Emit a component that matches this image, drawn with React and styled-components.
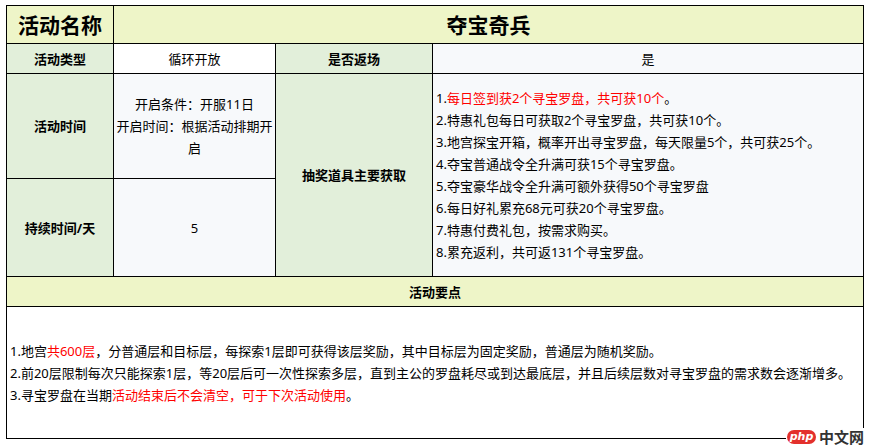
import React from 'react'
import styled, {createGlobalStyle} from 'styled-components'

const GlobalStyle = createGlobalStyle`
  body {
    margin: 0;
    background: #fff;
    font-family: "Noto Sans", "Noto Sans CJK SC", sans-serif;
    color: #000;
  }
`

const Page = styled.div`
  position: relative;
  width: 869px;
  height: 446px;
  padding: 5px 0 0 6px;
  box-sizing: border-box;
`

const Table = styled.table`
  width: 857px;
  border-collapse: collapse;
  table-layout: fixed;
  font-size: 13px;
  line-height: 22px;
`

const Row = styled.tr`
  height: ${props => props.h}px;
`

const Cell = styled.td`
  border: 1px solid #000;
  background: ${props => props.bg || '#fff'};
  font-weight: ${props => props.bold ? 700 : 400};
  text-align: ${props => props.align || 'center'};
  vertical-align: middle;
  padding: 0 ${props => props.pad ?? 3}px;
  box-sizing: border-box;
`

const Title = styled(Cell)`
  font-size: 21px;
  font-weight: 700;
  line-height: 28px;
`

const Line = styled.div`
  white-space: nowrap;
`

const Red = styled.span`
  color: #ff0000;
`

const Watermark = styled.div`
  position: absolute;
  left: 786px;
  top: 428px;
  display: flex;
  align-items: center;
  gap: 3px;
  background: #fff;
  padding: 1px 4px 1px 1px;
`

const PhpBadge = styled.span`
  display: inline-flex;
  align-items: center;
  justify-content: center;
  width: 29px;
  height: 14px;
  border-radius: 7px;
  background: #e3302c;
  color: #fff;
  font-family: "DejaVu Sans", sans-serif;
  font-size: 11px;
  font-style: italic;
  font-weight: 700;
  line-height: 14px;
`

const SiteName = styled.span`
  font-family: "Noto Sans CJK SC", sans-serif;
  font-size: 15px;
  font-weight: 700;
  color: #333;
  line-height: 16px;
`

const YELLOW = '#eef5c8'
const GREEN = '#e2efda'
const LIGHT = '#f7f9fb'

const sources = [
  <><span>1.</span><Red>每日签到获2个寻宝罗盘，共可获10个</Red>。</>,
  '2.特惠礼包每日可获取2个寻宝罗盘，共可获10个。',
  '3.地宫探宝开箱，概率开出寻宝罗盘，每天限量5个，共可获25个。',
  '4.夺宝普通战令全升满可获15个寻宝罗盘。',
  '5.夺宝豪华战令全升满可额外获得50个寻宝罗盘',
  '6.每日好礼累充68元可获20个寻宝罗盘。',
  '7.特惠付费礼包，按需求购买。',
  '8.累充返利，共可返131个寻宝罗盘。',
]

const App = () => {
  return (
    <Page>
      <GlobalStyle/>
      <Table>
        <colgroup>
          <col style={{width: 107}}/>
          <col style={{width: 162}}/>
          <col style={{width: 157}}/>
          <col style={{width: 431}}/>
        </colgroup>
        <tbody>
          <Row h={38}>
            <Title bg={YELLOW}>活动名称</Title>
            <Title bg={YELLOW} colSpan={3}>夺宝奇兵</Title>
          </Row>
          <Row h={30}>
            <Cell bg={GREEN} bold>活动类型</Cell>
            <Cell>循环开放</Cell>
            <Cell bg={GREEN} bold>是否返场</Cell>
            <Cell bg={LIGHT}>是</Cell>
          </Row>
          <Row h={105}>
            <Cell bg={GREEN} bold>活动时间</Cell>
            <Cell bg={LIGHT} pad={1}>
              开启条件：开服11日<br/>
              开启时间：根据活动排期开启
            </Cell>
            <Cell bg={GREEN} bold rowSpan={2}>抽奖道具主要获取</Cell>
            <Cell bg={LIGHT} rowSpan={2} align="left">
              {sources.map((s, i) => <Line key={i}>{s}</Line>)}
            </Cell>
          </Row>
          <Row h={98}>
            <Cell bg={GREEN} bold>持续时间/天</Cell>
            <Cell bg={LIGHT}>5</Cell>
          </Row>
          <Row h={30}>
            <Cell bg={YELLOW} bold colSpan={4}>活动要点</Cell>
          </Row>
          <Row h={132}>
            <Cell colSpan={4} align="left">
              <Line>1.地宫<Red>共600层</Red>，分普通层和目标层，每探索1层即可获得该层奖励，其中目标层为固定奖励，普通层为随机奖励。</Line>
              <Line>2.前20层限制每次只能探索1层，等20层后可一次性探索多层，直到主公的罗盘耗尽或到达最底层，并且后续层数对寻宝罗盘的需求数会逐渐增多。</Line>
              <Line>3.寻宝罗盘在当期<Red>活动结束后不会清空，可于下次活动使用</Red>。</Line>
            </Cell>
          </Row>
        </tbody>
      </Table>
      <Watermark>
        <PhpBadge>php</PhpBadge>
        <SiteName>中文网</SiteName>
      </Watermark>
    </Page>
  )
}

export default App
